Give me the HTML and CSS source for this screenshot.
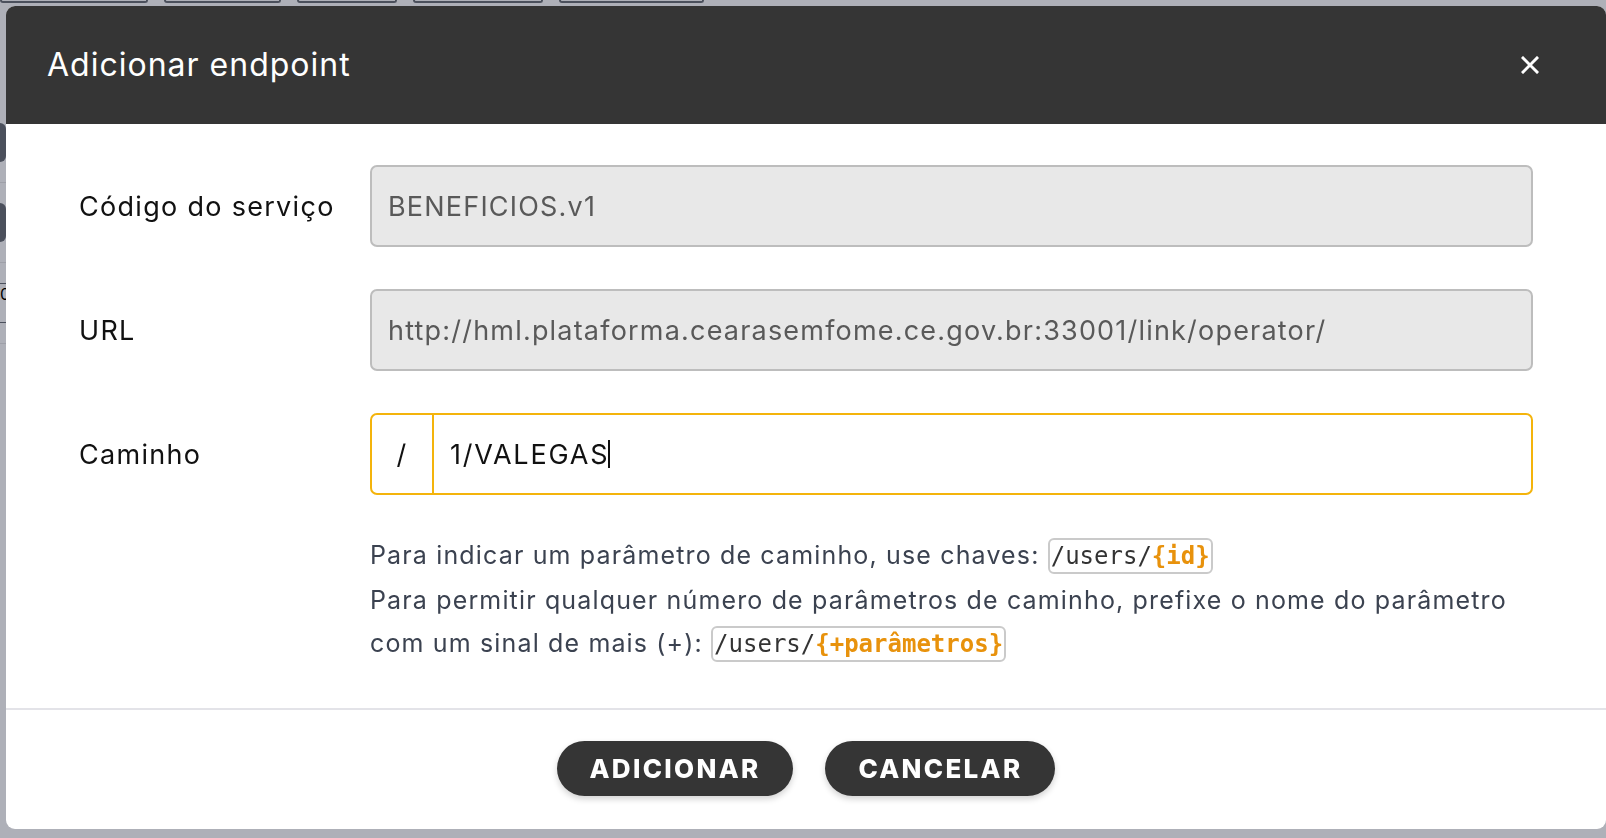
FILE: index.html
```html
<!DOCTYPE html>
<html lang="pt-BR">
<head>
<meta charset="utf-8">
<title>Adicionar endpoint</title>
<link rel="stylesheet" href="styles.css">
</head>
<body>
<div class="page">
  <div class="topbar">
    <span class="pill w148"></span>
    <span class="pill w117"></span>
    <span class="pill w100"></span>
    <span class="pill w130"></span>
    <span class="pill w145"></span>
  </div>
  <div class="side">
    <div class="blob"></div>
    <div class="rule light"></div>
    <div class="blob"></div>
    <div class="rule light"></div>
    <div class="rule dark"></div>
    <div class="digit">0</div>
    <div class="rule dark"></div>
    <div class="rule light"></div>
  </div>
</div>

<div class="modal" role="dialog" aria-labelledby="modal-title">
  <header class="modal-header">
    <h1 id="modal-title" class="modal-title">Adicionar endpoint</h1>
    <button class="close-btn" aria-label="Fechar">
      <svg width="18" height="18" viewBox="0 0 18 18"><path d="M2 2 L16 16 M16 2 L2 16" stroke="#fff" stroke-width="3" stroke-linecap="square"/></svg>
    </button>
  </header>

  <section class="modal-body">
    <div class="form-row">
      <label class="form-label">Código do serviço</label>
      <div class="field disabled">BENEFICIOS.v1</div>
    </div>
    <div class="form-row">
      <label class="form-label">URL</label>
      <div class="field disabled">http://hml.plataforma.cearasemfome.ce.gov.br:33001/link/operator/</div>
    </div>
    <div class="form-row">
      <label class="form-label">Caminho</label>
      <div class="field active">
        <span class="prefix">/</span>
        <span class="value">1/VALEGAS<span class="caret"></span></span>
      </div>
    </div>
    <div class="form-row">
      <span></span>
      <p class="help">Para indicar um parâmetro de caminho, use chaves: <code class="code">/users/<b>{id}</b></code><br>Para permitir qualquer número de parâmetros de caminho, prefixe o nome do parâmetro<br>com um sinal de mais (+): <code class="code">/users/<b>{+parâmetros}</b></code></p>
    </div>
  </section>

  <footer class="modal-footer">
    <button class="btn">ADICIONAR</button>
    <button class="btn">CANCELAR</button>
  </footer>
</div>
</body>
</html>
```
FILE: styles.css
```css
* { box-sizing: border-box; }
html, body { margin: 0; height: 100%; }
body {
  background: #aeb0b8;
  overflow: hidden;
  font-family: "Inter", "Noto Sans", sans-serif;
}

/* background page (dimmed by overlay) */
.topbar { display: flex; gap: 16px; }
.pill {
  height: 3px;
  border: 2px solid #4b505c;
  border-top: none;
  border-radius: 0 0 8px 8px;
}
.w148 { width: 148px; }
.w117 { width: 117px; }
.w100 { width: 100px; }
.w130 { width: 130px; }
.w145 { width: 145px; }
.side { width: 6px; padding-top: 120px; display: flex; flex-direction: column; }
.blob { height: 39px; background: #4b505c; border-radius: 0 10px 10px 0; }
.rule { height: 1px; margin: 20px 0; }
.rule.light { background: #9ea0a8; }
.rule.dark { background: #4b505c; margin: 0; }
.digit { height: 38px; }

/* modal */
.modal {
  position: fixed;
  left: 6px;
  top: 6px;
  width: 1600px;
  height: 823px;
  background: #fff;
  border-radius: 9px;
  overflow: hidden;
  display: flex;
  flex-direction: column;
}
.modal-header {
  height: 118px;
  flex: none;
  background: #353535;
  display: flex;
  align-items: center;
  justify-content: space-between;
  padding: 0 67px 1px 41px;
}
.modal-title {
  margin: 0;
  color: #fff;
  font-weight: 400;
  font-size: 32px;
  letter-spacing: 1px;
}
.close-btn {
  background: none;
  border: none;
  padding: 0;
  width: 18px;
  height: 18px;
  display: flex;
  cursor: pointer;
}

.modal-body {
  padding: 41px 73px 41px 73px;
  border-bottom: 2px solid #e3e3e8;
}
.form-row {
  display: grid;
  grid-template-columns: 291px 1fr;
  align-items: center;
  margin-bottom: 42px;
}
.form-row:nth-child(3) { margin-bottom: 39px; }
.form-row:last-child { margin-bottom: 0; }
.form-label {
  color: #111;
  font-size: 27px;
  letter-spacing: 1.3px;
}
.field {
  height: 82px;
  border: 2px solid #bdbdbd;
  border-radius: 7px;
  display: flex;
  align-items: center;
  font-size: 27px;
  letter-spacing: 1.2px;
}
.field.disabled {
  background: #e8e8e8;
  color: #595959;
  padding-left: 16px;
}
.field.active {
  border-color: #f4b40c;
  color: #111;
  align-items: stretch;
}
.prefix {
  width: 62px;
  border-right: 2px solid #f4b40c;
  display: flex;
  align-items: center;
  justify-content: center;
}
.value {
  display: flex;
  align-items: center;
  padding-left: 16px;
  letter-spacing: 1.8px;
}
.caret {
  display: inline-block;
  width: 2px;
  height: 28px;
  background: #111;
  margin-left: -1px;
}

.help {
  margin: 0;
  color: #3b4250;
  font-size: 25px;
  line-height: 43.5px;
  letter-spacing: 1.15px;
}
.code {
  font-family: "DejaVu Sans Mono", monospace;
  font-size: 24px;
  color: #333;
  border: 2px solid #cacaca;
  border-radius: 6px;
  padding: 2px 1px;
  letter-spacing: 0;
}
.code b { color: #e8920c; }

.modal-footer {
  display: flex;
  justify-content: center;
  gap: 32px;
  padding-top: 31px;
}
.btn {
  height: 55px;
  padding: 0 33px;
  border: none;
  border-radius: 28px;
  background: #353535;
  color: #fff;
  font-family: inherit;
  font-weight: 800;
  font-size: 26px;
  letter-spacing: 2.3px;
  box-shadow: 0 3px 6px rgba(0,0,0,0.18);
  cursor: pointer;
}
```
